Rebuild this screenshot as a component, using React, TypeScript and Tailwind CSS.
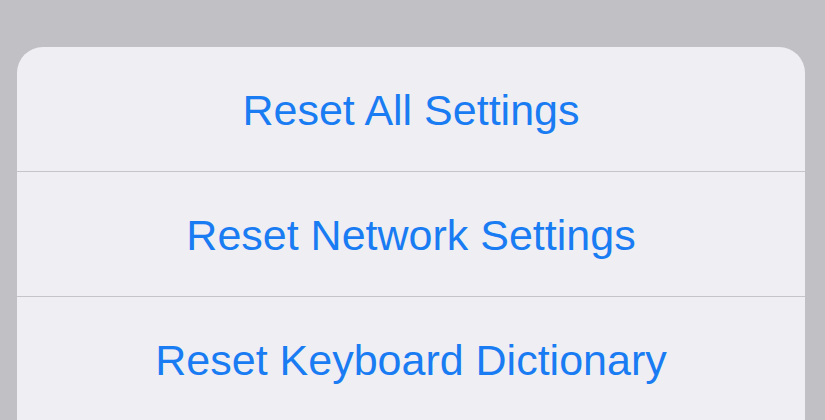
const ACTIONS = ['Reset All Settings', 'Reset Network Settings', 'Reset Keyboard Dictionary'];

export default function App() {
  return (
    <div className="h-[420px] w-[825px] overflow-hidden bg-[#c0c0c5] pt-[47px]">
      <div className="ml-[17px] w-[788px] overflow-hidden rounded-t-[26px] bg-[#efeff3]">
        {ACTIONS.map((label, i) => (
          <button
            key={label}
            type="button"
            className={`flex h-[125px] w-full items-center justify-center pt-[2px] text-[43px] leading-none text-[#1a7cf2] ${
              i < ACTIONS.length - 1 ? 'border-b border-[#c5c5c9]' : ''
            }`}
            style={{ fontFamily: '"Liberation Sans", Arial, sans-serif' }}
          >
            {label}
          </button>
        ))}
      </div>
    </div>
  );
}
